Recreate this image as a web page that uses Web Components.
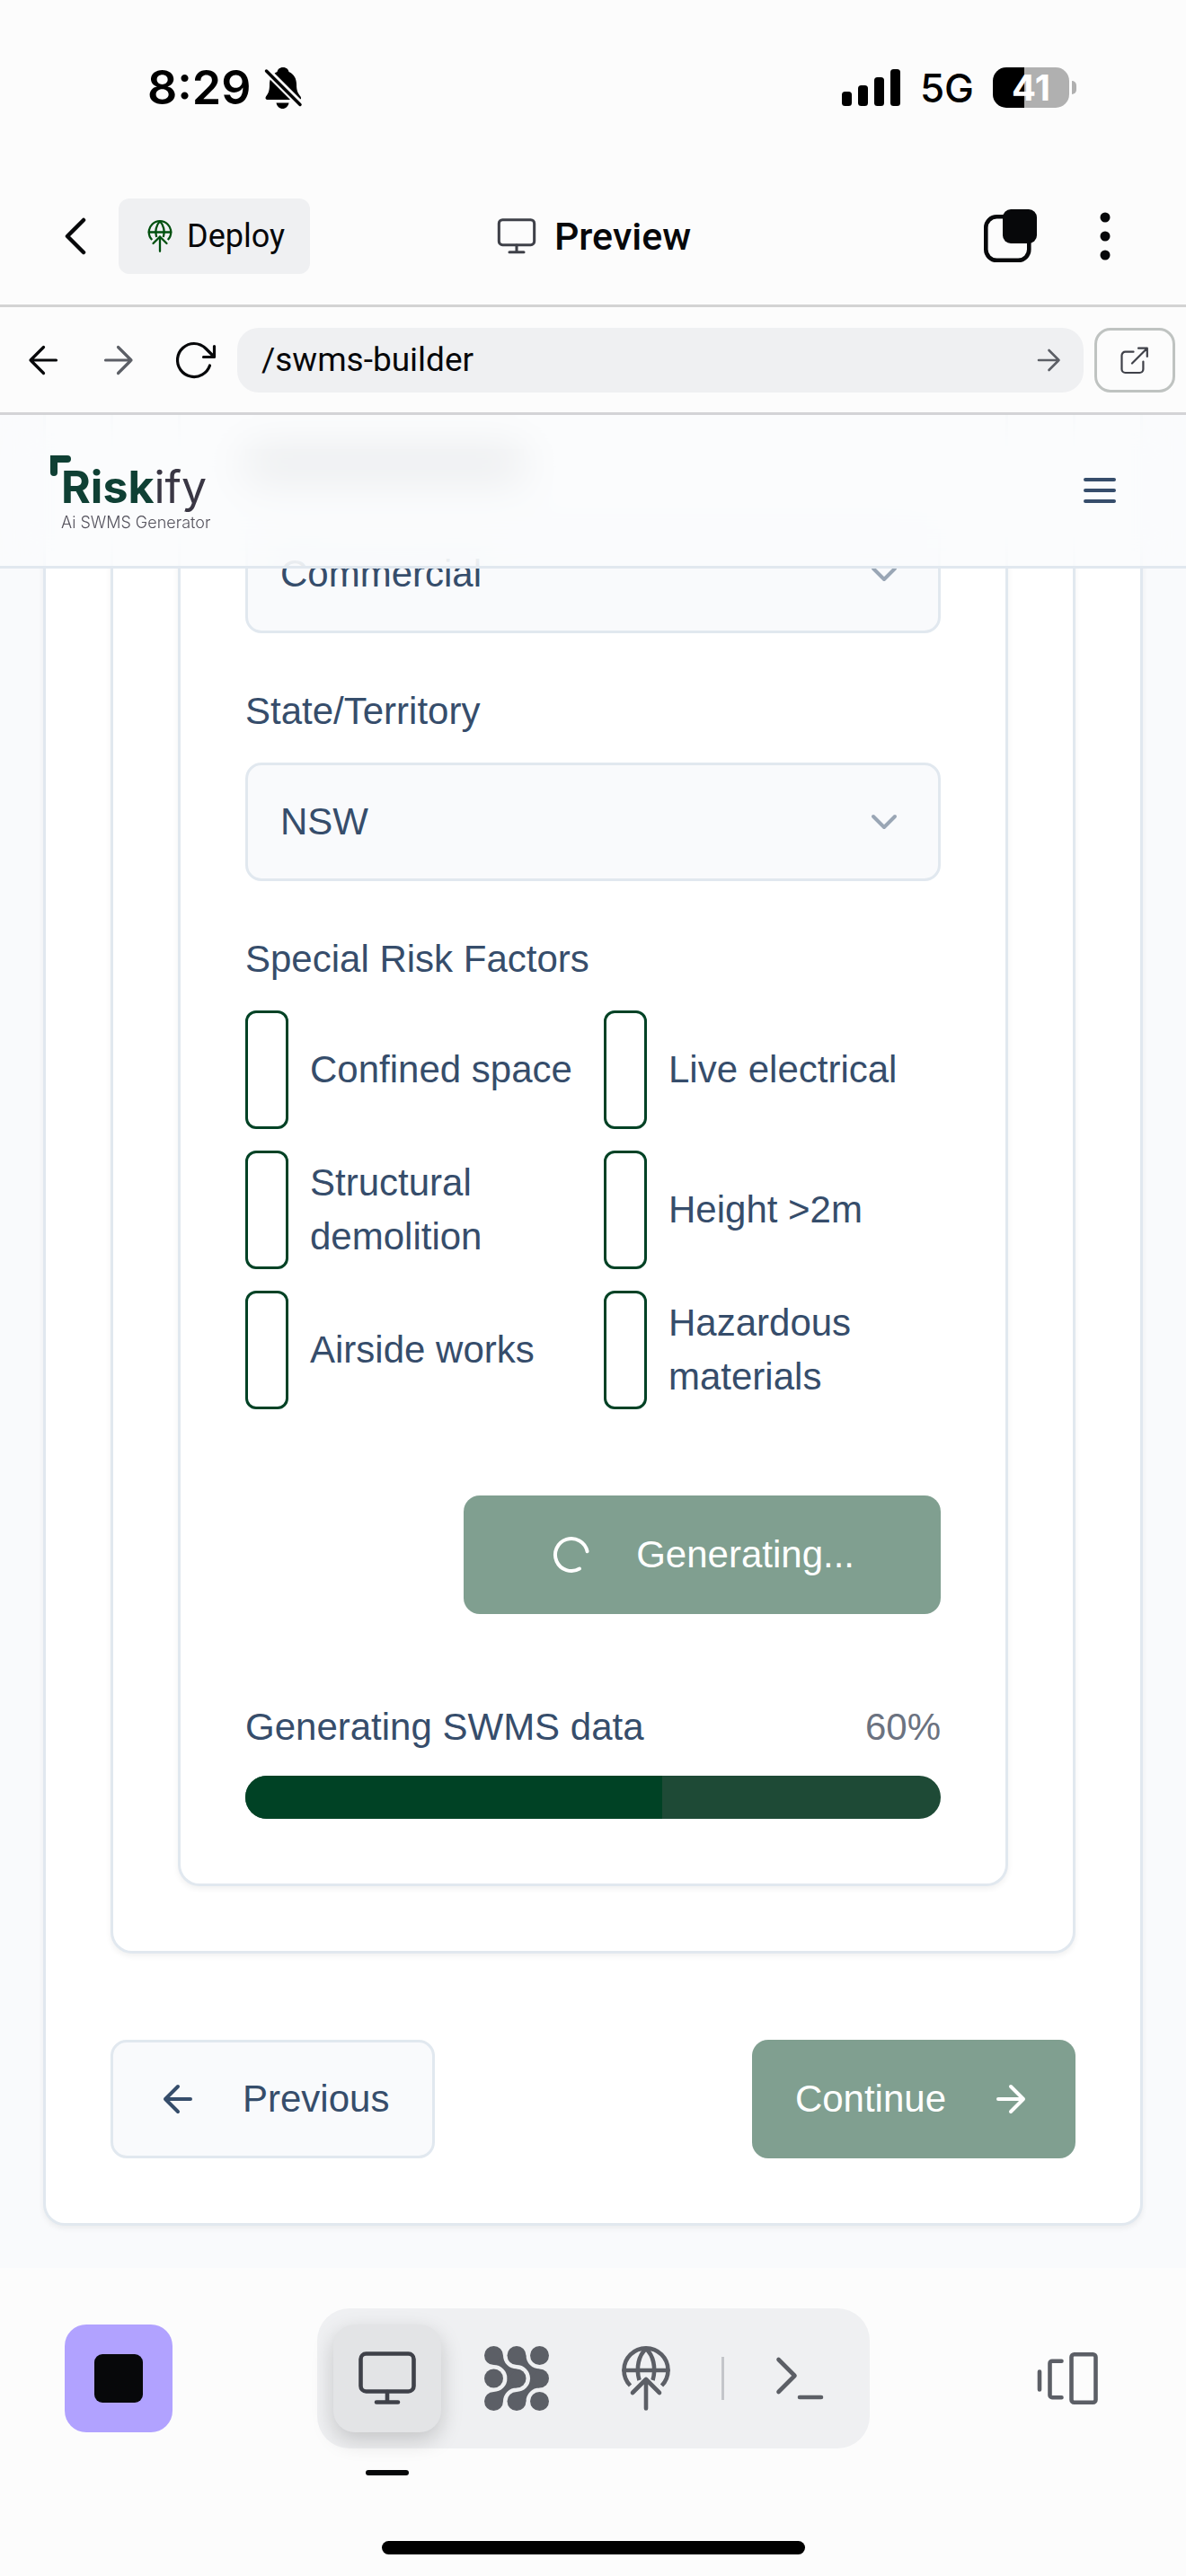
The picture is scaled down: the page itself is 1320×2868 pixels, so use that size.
<!DOCTYPE html>
<html lang="en">
<head>
<meta charset="utf-8">
<meta name="viewport" content="width=device-width, initial-scale=1">
<title>SWMS Builder preview</title>
<style>
  :root {
    --chrome: #fcfcfc; --ink: #07080a; --fill: #eff0f2; --muted: #5c5f66;
    --page: #f9fafc; --line: #e1e8ef; --text: #364d6b; --green: #004225; --green-soft: #809f90;
    --ui: Roboto, "Noto Sans", sans-serif;
    --sys: Inter, "Liberation Sans", sans-serif;
    --app: "Liberation Sans", Arial, sans-serif;
  }
  body { margin: 0; min-height: 100vh; display: flex; flex-direction: column; background: var(--chrome); color: var(--ink); font-family: var(--ui); }
  app-view { flex: 1; }
</style>
</head>
<body>
<status-bar></status-bar>
<preview-header></preview-header>
<url-bar></url-bar>
<app-view>
  <form-card>
    <form-card>
      <form-card inner>
        <select-field label="" value="Commercial" options="Commercial|Residential|Civil"></select-field>
        <select-field label="State/Territory" value="NSW" options="NSW|VIC|QLD|WA|SA|TAS|ACT|NT"></select-field>
        <risk-group label="Special Risk Factors">
          <risk-check>Confined space</risk-check>
          <risk-check>Live electrical</risk-check>
          <risk-check>Structural demolition</risk-check>
          <risk-check>Height &gt;2m</risk-check>
          <risk-check>Airside works</risk-check>
          <risk-check>Hazardous materials</risk-check>
        </risk-group>
        <action-row align="end">
          <action-button wide icon="spinner">Generating...</action-button>
        </action-row>
        <progress-meter label="Generating SWMS data" value="60"></progress-meter>
      </form-card>
    </form-card>
    <action-row>
      <action-button outline icon="arrow-left">Previous</action-button>
      <action-button icon="arrow-right" trailing>Continue</action-button>
    </action-row>
  </form-card>
</app-view>
<dock-bar></dock-bar>

<script>
const ICONS = {
  bell: ['0 0 48 48', '<g stroke="none" fill="currentColor"><path d="M23 1c4 0 6 2.500 6.500 5 6 2.500 8.500 8 8.500 14 0 8 2 10 4.500 13.500 1.200 2 .5 3.500-1.500 3.500H6c-2 0-3.200-1.500-2-3.500C6.500 30 8 28 8 20c0-6 2.500-11.500 8.500-14C17 3.500 19 1 23 1z"/><path d="M15.500 40.500h14c-.8 4-3.500 6.500-7 6.500s-6.200-2.500-7-6.500z"/></g><path d="M2 2l43 43" stroke="#fcfcfc" stroke-width="8.500"/><path d="M4.500 5l37.500 37.500" stroke-width="3.500"/>'],
  signal: ['0 0 66 42', '<g fill="currentColor" stroke="none"><rect y="25" width="11" height="16" rx="3.500"/><rect x="18" y="18" width="11" height="23" rx="3.500"/><rect x="36" y="9" width="11" height="32" rx="3.500"/><rect x="54" width="11" height="41" rx="3.500"/></g>'],
  chevron: ['0 0 48 48', '<path d="M33 6L15 24l18 18" stroke-width="4.500"/>'],
  globe: ['0 0 72 72', '<g stroke-width="4.600"><path d="M18.500 44A24.500 24.500 0 1 1 53.500 44" stroke-linecap="butt"/><path d="M11.500 27h49"/><path d="M28.500 38C24.500 24 28 10 36 3M43.500 38C47.500 24 44 10 36 3" stroke-linecap="butt"/><path d="M36 37v32.500M21 52l15-15 15 15"/></g>'],
  monitor: ['0 0 72 72', '<g stroke-width="4.600"><rect x="6.500" y="8.500" width="59" height="42" rx="6"/><path d="M36 51v11M24 62.500h24"/></g>'],
  copy: ['0 0 60 60', '<rect x="2.300" y="8.300" width="48" height="48.500" rx="12" stroke-width="4.600"/><rect x="21" width="38" height="38" rx="9" fill="currentColor" stroke="none"/>'],
  dots: ['0 0 60 60', '<g fill="currentColor" stroke="none"><circle cx="30" cy="9" r="5.500"/><circle cx="30" cy="30" r="5.500"/><circle cx="30" cy="51" r="5.500"/></g>'],
  back: ['0 0 48 48', '<path d="M38.500 24H10M24.500 9.500L10 24l14.500 14.500" stroke-width="3.200"/>'],
  forward: ['0 0 48 48', '<path d="M9.500 24H38M23.500 9.500L38 24 23.500 38.500" stroke-width="3.200"/>'],
  refresh: ['0 0 48 48', '<path d="M41.500 30A18.500 18.500 0 1 1 24 5.500c6 0 10 2.500 13.500 6L46 20M46.500 8.500V20.500H34.500" stroke-width="3.200"/>'],
  go: ['0 0 36 36', '<path d="M7 18h22.500M18.500 7l11 11-11 11" stroke-width="2.600"/>'],
  external: ['0 0 36 36', '<path d="M16.500 8.700H7.500a4 4 0 0 0-4 4V28a4 4 0 0 0 4 4H23.400a4 4 0 0 0 4-4V19.500M15 21.500L31.500 5M22 4.700h9.800V14" stroke-width="2.200"/>'],
  menu: ['0 0 24 24', '<path d="M4 6h16M4 12h16M4 18h16" stroke-width="2"/>'],
  down: ['0 0 24 24', '<path d="M6 9l6 6 6-6" stroke-width="2"/>'],
  'arrow-left': ['0 0 24 24', '<path d="M12 19l-7-7 7-7M19 12H5" stroke-width="2"/>'],
  'arrow-right': ['0 0 24 24', '<path d="M5 12h14M12 5l7 7-7 7" stroke-width="2"/>'],
  spinner: ['0 0 24 24', '<path transform="rotate(60 12 12)" d="M21 12a9 9 0 1 1-6.219-8.560" stroke-width="2"/>'],
  agents: ['0 0 72 72', '<g fill="currentColor" stroke="none"><circle cx="10.500" cy="10.500" r="10.500"/><circle cx="36" cy="10.500" r="10.500"/><circle cx="61.500" cy="10.500" r="10.500"/><circle cx="10.500" cy="36" r="10.500"/><circle cx="36" cy="36" r="10.500"/><circle cx="61.500" cy="36" r="10.500"/><circle cx="10.500" cy="61.500" r="10.500"/><circle cx="36" cy="61.500" r="10.500"/><circle cx="61.500" cy="61.500" r="10.500"/><path d="M21 10.500A15 15 0 0 0 36 25.500L25.500 36A15 15 0 0 0 10.500 21z"/><path d="M46.500 10.500A15 15 0 0 0 61.500 25.500L51 36A15 15 0 0 0 36 21z"/><path d="M21 61.500A15 15 0 0 1 36 46.500L25.500 36A15 15 0 0 1 10.500 51z"/><path d="M46.500 61.500A15 15 0 0 1 61.500 46.500L51 36A15 15 0 0 1 36 51z"/></g>'],
  terminal: ['0 0 72 72', '<path d="M12.500 15l18 18-18 18M36 57h24" stroke-width="4.600"/>'],
  panels: ['0 0 72 72', '<g stroke-width="4.600"><path d="M5 28.500v20M29.500 16.700H19a2.500 2.500 0 0 0-2.500 2.500v35.500a2.500 2.500 0 0 0 2.500 2.500h10.500"/><rect x="40.500" y="9.200" width="27" height="53.600" rx="3"/></g>'],
  bracket: ['0 0 24 24', '<path fill="#0f4034" stroke="none" d="M0 0H19a4 4 0 0 1 4 4v0a4 4 0 0 1-4 4H8V19a4 4 0 0 1-4 4h0a4 4 0 0 1-4-4z"/>'],
  stop: ['0 0 54 54', '<rect width="54" height="54" rx="9" fill="currentColor" stroke="none"/>']
};

const define = (name, render) => customElements.define(name, class extends HTMLElement {
  connectedCallback() {
    if (this.shadowRoot) return;
    this.attachShadow({ mode: 'open' }).innerHTML = `<style>
      *, ::before { box-sizing: border-box; }
      button { margin: 0; padding: 0; border: 0; background: none; color: inherit; font: inherit; display: flex; align-items: center; justify-content: center; cursor: pointer; }
      </style>` + render(this);
  }
});

define('ui-icon', el => {
  const [box, body] = ICONS[el.getAttribute('name')];
  const w = el.getAttribute('size') || 48, h = el.getAttribute('tall') || w;
  return `<style>:host{display:block;flex:none;width:${w}px;height:${h}px} svg{display:block;width:100%;height:100%;overflow:visible}</style>
    <svg viewBox="${box}" fill="none" stroke="currentColor" stroke-linecap="round" stroke-linejoin="round" aria-hidden="true">${body}</svg>`;
});

define('status-bar', () => `<style>
  :host{display:flex;justify-content:space-between;align-items:center;height:75px;padding:60px 122px 51px 164px;font-family:var(--sys);color:#000}
  .side{display:flex;align-items:center;gap:12px}
  .time{font-size:52px;font-weight:600;line-height:60px}
  .net{font-size:44px;font-weight:500;line-height:54px;margin:0 9px}
  .battery{display:flex;align-items:center;gap:3px}
  .cell{width:85px;height:45px;border-radius:15px;background:linear-gradient(90deg,#000 41%,#b0b0b0 41%);color:#fff;font-size:40px;font-weight:700;line-height:45px;text-align:center}
  .nub{width:5px;height:15px;border-radius:0 5px 5px 0;background:#b0b0b0}
  </style>
  <div class="side"><span class="time">8:29</span><ui-icon name="bell"></ui-icon></div>
  <div class="side"><ui-icon name="signal" size="66" tall="42"></ui-icon><span class="net">5G</span>
  <div class="battery"><div class="cell">41</div><div class="nub"></div></div></div>`);

define('preview-header', () => `<style>
  :host{display:grid;grid-template-columns:1fr auto 1fr;align-items:center;height:153px;padding:0 60px;border-bottom:3px solid #d3d3d3}
  .left{display:flex;align-items:center;gap:24px}
  .deploy{height:84px;padding:0 28px;gap:12px;border-radius:12px;background:var(--fill);font-size:36px}
  .deploy ui-icon{color:#00500f}
  h1{margin:0;display:flex;align-items:center;gap:18px;font-size:43px;line-height:54px;font-weight:500}
  h1 ui-icon{color:#3f4149}
  .right{display:flex;justify-content:flex-end;align-items:center;gap:45px}
  </style>
  <div class="left"><button aria-label="Back"><ui-icon name="chevron"></ui-icon></button>
  <button class="deploy"><ui-icon name="globe" size="36"></ui-icon>Deploy</button></div>
  <h1><ui-icon name="monitor"></ui-icon>Preview</h1>
  <div class="right"><button aria-label="Tabs"><ui-icon name="copy" size="60"></ui-icon></button><button aria-label="More"><ui-icon name="dots" size="60"></ui-icon></button></div>`);

define('url-bar', () => `<style>
  :host{display:flex;align-items:center;height:117px;padding:0 12px 0 24px;border-bottom:3px solid #d3d3d6}
  .nav{display:flex;gap:36px;margin-right:24px}
  .off{color:var(--muted)}
  .url{flex:1;min-width:0;display:flex;align-items:center;height:72px;padding:0 21px 0 27px;border-radius:24px;background:var(--fill);color:var(--muted)}
  input{flex:1;min-width:0;border:0;padding:0;outline:0;background:none;color:var(--ink);font:37px/48px var(--ui)}
  .open{width:90px;height:72px;margin-left:12px;border:3px solid #bfc3c1;border-radius:18px;color:#3f4149}
  </style>
  <div class="nav"><button aria-label="Back"><ui-icon name="back"></ui-icon></button><button class="off" aria-label="Forward"><ui-icon name="forward"></ui-icon></button><button aria-label="Reload"><ui-icon name="refresh"></ui-icon></button></div>
  <div class="url"><input type="text" aria-label="Path" value="/swms-builder"><button aria-label="Go"><ui-icon name="go" size="36"></ui-icon></button></div>
  <button class="open" aria-label="Open in new tab"><ui-icon name="external" size="36"></ui-icon></button>`);

/* The app header is translucent and floats over the scrolled form. */
define('app-view', () => `<style>
  :host{display:block;position:relative;overflow:hidden;padding:0 48px 47px;background:var(--page);color:var(--text);font-family:var(--app);font-size:42px;line-height:60px}
  header{position:absolute;z-index:1;top:0;left:0;right:0;height:171px;display:flex;align-items:center;justify-content:space-between;padding:0 72px 0 56px;border-bottom:3px solid var(--line);background:rgba(250,251,253,.8);backdrop-filter:blur(24px)}
  .logo{position:relative;display:block;margin-top:6px;padding:8px 0 0 12px;color:#3a3744;text-decoration:none;font-family:var(--sys)}
  .logo ui-icon{position:absolute;top:0;left:0}
  .name{display:block;font-size:50px;line-height:54px;font-weight:400}
  .name b{font-weight:700;color:#0f4034}
  .tag{display:block;margin-top:3px;font-size:18px;line-height:20px;font-weight:300;color:#54525c}
  </style>
  <header><a class="logo" href="#"><ui-icon name="bracket" size="24"></ui-icon><span class="name"><b>Risk</b>ify</span><span class="tag">Ai SWMS Generator</span></a>
  <button aria-label="Menu"><ui-icon name="menu"></ui-icon></button></header>
  <slot></slot>`);

define('form-card', () => `<style>
  :host{display:block;padding:0 72px 72px;border:3px solid var(--line);border-top:0;border-radius:0 0 24px 24px;background:#fff;box-shadow:0 3px 6px rgba(0,0,0,.06)}
  :host([inner]){padding-top:24px}
  </style><slot></slot>`);

define('select-field', el => {
  const label = el.getAttribute('label'), value = el.getAttribute('value');
  const options = el.getAttribute('options').split('|').map(o => `<option${o === value ? ' selected' : ''}>${o}</option>`).join('');
  return `<style>
  :host{display:block;margin-bottom:57px}
  label{display:block;height:60px;margin-bottom:27px}
  label:empty{display:flex;align-items:center}
  label:empty::before{content:"";width:310px;height:33px;background:#4b5058;opacity:.55}
  .box{display:grid;align-items:center}
  select,ui-icon{grid-area:1/1}
  select{width:100%;height:132px;padding:0 36px;border:3px solid var(--line);border-radius:18px;background:var(--page);color:inherit;font:inherit;appearance:none}
  ui-icon{justify-self:end;margin-right:39px;color:#9aa6b5;pointer-events:none}
  </style><label for="s">${label}</label><div class="box"><select id="s"${label ? '' : ' aria-label="Type"'}>${options}</select><ui-icon name="down"></ui-icon></div>`;
});

define('risk-group', el => `<style>
  :host{display:block} fieldset{margin:0;padding:0;border:0;min-width:0} legend{padding:0;margin-bottom:27px}
  .grid{display:grid;grid-template-columns:1fr 1fr;gap:24px}
  </style><fieldset><legend>${el.getAttribute('label')}</legend><div class="grid"><slot></slot></div></fieldset>`);

define('risk-check', () => `<style>
  :host{display:block} label{display:flex;align-items:center;gap:24px}
  input{appearance:none;flex:none;margin:0;width:48px;height:132px;border:3px solid var(--green);border-radius:12px;background:#fff}
  input:checked{background:var(--green)}
  </style><label><input type="checkbox"><span><slot></slot></span></label>`);

define('action-row', () => `<style>
  :host{display:flex;justify-content:space-between;margin-top:96px} :host([align=end]){justify-content:flex-end}
  </style><slot></slot>`);

define('action-button', el => {
  const icon = `<ui-icon name="${el.getAttribute('icon')}"></ui-icon>`;
  return `<style>
  :host{display:block}
  button{height:132px;padding:0 48px;gap:48px;border-radius:18px;background:var(--green-soft);color:#fff}
  :host([wide]) button{padding:0 96px}
  :host([outline]) button{border:3px solid var(--line);background:var(--page);color:var(--text)}
  </style><button type="button">${el.hasAttribute('trailing') ? '<slot></slot>' + icon : icon + '<slot></slot>'}</button>`;
});

define('progress-meter', el => `<style>
  :host{display:block;margin-top:96px}
  .head{display:flex;justify-content:space-between;margin-bottom:24px} .head span{color:#6b7280}
  progress{display:block;width:100%;height:48px;appearance:none;border:0;border-radius:24px;overflow:hidden;background:#1e4a36}
  progress::-webkit-progress-bar{background:#1e4a36} progress::-webkit-progress-value{background:var(--green)} progress::-moz-progress-bar{background:var(--green)}
  </style><div class="head"><label for="p">${el.getAttribute('label')}</label><span>${el.getAttribute('value')}%</span></div>
  <progress id="p" max="100" value="${el.getAttribute('value')}"></progress>`);

define('dock-bar', () => `<style>
  :host{display:block;padding:45px 72px 24px}
  .row{display:grid;grid-template-columns:1fr auto 1fr;align-items:center}
  .tabs{display:flex;align-items:center;gap:24px;padding:18px;border-radius:36px;background:var(--fill);color:var(--muted)}
  button{width:120px;height:120px;border-radius:24px}
  .stop{background:#b1a2ff}
  .on{position:relative;background:#e3e4e6;color:#3f4149;box-shadow:0 9px 24px rgba(0,0,0,.18)}
  .on::after{content:"";position:absolute;left:36px;bottom:-48px;width:48px;height:6px;border-radius:3px;background:var(--ink)}
  hr{margin:0;border:0;width:3px;height:48px;background:#c4c6ca}
  .side{justify-self:end;color:var(--muted)}
  .home{width:471px;max-width:100%;height:15px;margin:103px auto 0;border-radius:8px;background:#000}
  </style>
  <div class="row"><button class="stop" aria-label="Stop"><ui-icon name="stop" size="54"></ui-icon></button>
  <nav class="tabs"><button class="on" aria-label="Preview"><ui-icon name="monitor" size="72"></ui-icon></button><button aria-label="Agent"><ui-icon name="agents" size="72"></ui-icon></button><button aria-label="Deploy"><ui-icon name="globe" size="72"></ui-icon></button><hr><button aria-label="Console"><ui-icon name="terminal" size="72"></ui-icon></button></nav>
  <button class="side" aria-label="Panels"><ui-icon name="panels" size="72"></ui-icon></button></div>
  <div class="home"></div>`);
</script>
</body>
</html>
